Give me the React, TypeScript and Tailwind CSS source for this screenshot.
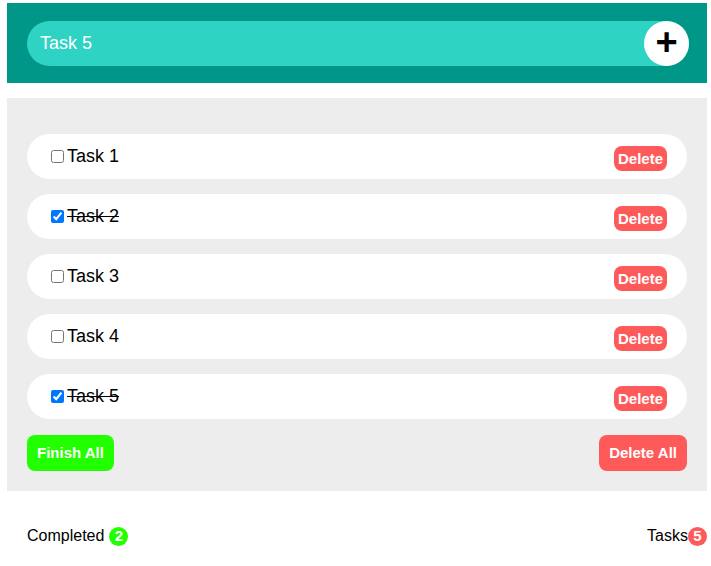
import { useState } from "react";

type Task = { id: number; text: string; done: boolean };

const initialTasks: Task[] = [
  { id: 1, text: "Task 1", done: false },
  { id: 2, text: "Task 2", done: true },
  { id: 3, text: "Task 3", done: false },
  { id: 4, text: "Task 4", done: false },
  { id: 5, text: "Task 5", done: true },
];

export default function App() {
  const [tasks, setTasks] = useState<Task[]>(initialTasks);
  const [draft, setDraft] = useState("Task 5");

  const completed = tasks.filter((t) => t.done).length;

  const toggle = (id: number) =>
    setTasks((prev) => prev.map((t) => (t.id === id ? { ...t, done: !t.done } : t)));

  return (
    <div className="min-h-[566px] bg-white pt-[3px] font-['Liberation_Sans',Arial,sans-serif] text-black">
      <div className="ml-[7px] w-[700px]">
        {/* Header / input */}
        <div className="flex h-[80px] items-center bg-[#009688] pr-[18px] pl-5">
          <div className="flex h-[45px] w-full items-center rounded-full bg-[#2ed3c4]">
            <input
              value={draft}
              onChange={(e) => setDraft(e.target.value)}
              className="h-full flex-1 bg-transparent pl-[13px] text-[18px] text-white outline-none"
            />
            <button className="flex h-[45px] w-[45px] items-center justify-center rounded-full bg-white">
              <span className="-mt-[2px] text-[38px] leading-none font-bold text-black">+</span>
            </button>
          </div>
        </div>

        {/* Task list */}
        <div className="mt-[15px] bg-[#ededed] px-5 pt-[36px] pb-5">
          <div className="flex flex-col gap-[15px]">
            {tasks.map((t) => (
              <div
                key={t.id}
                className="flex h-[45px] items-center justify-between rounded-full bg-white pr-5 pl-[21px]"
              >
                <label className="flex items-center text-[18px]">
                  <input
                    type="checkbox"
                    checked={t.done}
                    onChange={() => toggle(t.id)}
                    className="mx-[3px] h-[13px] w-[13px] accent-[#0075ff]"
                  />
                  <span className={t.done ? "line-through" : ""}>{t.text}</span>
                </label>
                <button
                  onClick={() => setTasks((prev) => prev.filter((x) => x.id !== t.id))}
                  className="mt-[3px] rounded-[8px] bg-[#ff5a5a] px-[4px] py-[3px] text-[15px] leading-[19px] font-bold text-white"
                >
                  Delete
                </button>
              </div>
            ))}
          </div>

          <div className="mt-4 flex items-center justify-between">
            <button
              onClick={() => setTasks((prev) => prev.map((t) => ({ ...t, done: true })))}
              className="h-[36px] rounded-[8px] bg-[#22ff00] px-[10px] text-[15px] font-bold text-white"
            >
              Finish All
            </button>
            <button
              onClick={() => setTasks([])}
              className="h-[36px] rounded-[8px] bg-[#ff5a5a] px-[10px] text-[15px] font-bold text-white"
            >
              Delete All
            </button>
          </div>
        </div>

        {/* Footer counters */}
        <div className="mt-[33px] flex items-center justify-between pl-5 text-[16px]">
          <div className="flex items-center">
            <span>Completed</span>
            <span className="ml-[5px] flex h-[19px] w-[19px] items-center justify-center rounded-full bg-[#22ff00] text-[15px] font-bold text-white">
              {completed}
            </span>
          </div>
          <div className="flex items-center">
            <span>Tasks</span>
            <span className="flex h-[19px] w-[19px] items-center justify-center rounded-full bg-[#ff5a5a] text-[15px] font-bold text-white">
              {tasks.length}
            </span>
          </div>
        </div>
      </div>
    </div>
  );
}
